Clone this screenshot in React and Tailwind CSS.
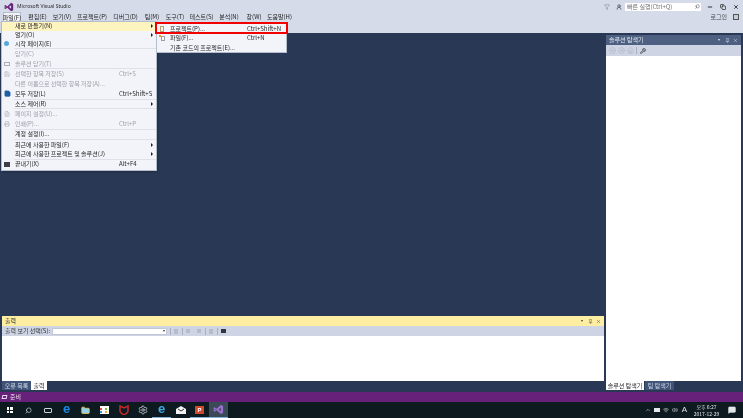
import React from "react";
import { Search, Settings, Filter, Wrench, Pin, X, Minus, Copy, ChevronUp, Home, CircleArrowLeft, CircleArrowRight, Wifi, Volume2, MessageSquare, Folder, Save, Printer, FileText, UserRound } from "lucide-react";

const VS = ({ s = 12, c = "#68217a" }) => (
  <svg width={s} height={s} viewBox="0 0 24 24"><path d="M17 2l5 2.500v15L17 22 8 13.500 3.500 17 1.500 16V8l2-1L8 10.500 17 2zM4 10v4l2-2zM12 12l5 4V8z" fill={c} /></svg>
);

const menus = [
  ["파일(F)", "w-[18px] ml-[3px] bg-[#f2f4f9] border-x border-t border-[#b4bdcb]"], ["편집(E)", "w-[17px] ml-[8px]"], ["보기(V)", "w-[18px] ml-[7px]"], ["프로젝트(P)", "w-[28px] ml-[7px]"],
  ["디버그(D)", "w-[25px] ml-[7px]"], ["팀(M)", "w-[14px] ml-[7px]"], ["도구(T)", "w-[18px] ml-[7px]"], ["테스트(S)", "w-[23px] ml-[6px]"],
  ["분석(N)", "w-[18px] ml-[7px]"], ["창(W)", "w-[14px] ml-[9px]"], ["도움말(H)", "w-[23px] ml-[7px]"],
];

const Row = ({ label, key2, arrow, off, hi, icon, short }) => (
  <div className={`relative flex items-center ${short ? "h-[8.700px]" : "h-[9.700px]"} pl-[13px] pr-[3px] ${hi ? "bg-[#fdf4bf]" : ""} ${off ? "text-[#9a9fa8]" : "text-[#1e1e1e]"}`}>
    {icon && <span className="absolute left-[2px] top-0 h-full flex items-center">{icon}</span>}
    <span className="flex-1 whitespace-nowrap">{label}</span>
    {key2 && <span className="absolute left-[117px] whitespace-nowrap">{key2}</span>}
    {arrow && <span className="w-0 h-0 border-y-[2px] border-y-transparent border-l-[2.500px] border-l-[#1e1e1e]" />}
  </div>
);
const Sep = () => <div className="h-px ml-[12px] bg-[#dde1ea]" />;

function FileMenu() {
  return (
    <div className="absolute left-[1px] top-[21px] w-[156px] h-[150px] bg-[#f2f4f9] border border-[#b4bdcb] shadow-[1px_1px_2px_rgba(0,0,0,0.25)]">
      <Row short label="새로 만들기(N)" arrow hi />
      <Row short label="열기(O)" arrow />
      <Row short label="시작 페이지(E)" icon={<span className="block w-[5px] h-[5px] rounded-full bg-[#56a8dc]" />} />
      <Sep />
      <Row label="닫기(C)" off />
      <Row label="솔루션 닫기(T)" off icon={<span className="block w-[6px] h-[4px] border border-[#aab0bc]" />} />
      <Sep />
      <Row label="선택한 항목 저장(S)" key2="Ctrl+S" off icon={<Save size={6} className="text-[#a5abb6]" />} />
      <Row label="다른 이름으로 선택한 항목 저장(A)..." off />
      <Row label="모두 저장(L)" key2="Ctrl+Shift+S" icon={<Save size={7} className="text-[#1d5fa8] fill-[#1d5fa8]" />} />
      <Sep />
      <Row short label="소스 제어(R)" arrow />
      <Sep />
      <Row label="페이지 설정(U)..." off icon={<FileText size={6} className="text-[#a5abb6]" />} />
      <Row label="인쇄(P)..." key2="Ctrl+P" off icon={<Printer size={6} className="text-[#a5abb6]" />} />
      <Sep />
      <Row label="계정 설정(I)..." />
      <Sep />
      <Row label="최근에 사용한 파일(F)" arrow />
      <Row short label="최근에 사용한 프로젝트 및 솔루션(J)" arrow />
      <Sep />
      <Row label="끝내기(X)" key2="Alt+F4" icon={<span className="block w-[6px] h-[5px] bg-[#3a3f4a]" />} />
    </div>
  );
}

function SubMenu() {
  const cls = "relative flex items-center h-[9.500px] pl-[13px] text-[#1e1e1e] whitespace-nowrap";
  return (
    <div className="absolute left-[156px] top-[23px] w-[131px] h-[30px] bg-[#f2f4f9] border border-[#b4bdcb]">
      <div className={cls}>
        <span className="absolute left-[3px] w-[4px] h-[6px] border border-[#b9a06a]" />
        프로젝트(P)...<span className="absolute left-[90px]">Ctrl+Shift+N</span>
      </div>
      <div className={cls}>
        <span className="absolute left-[4px] w-[4px] h-[5px] border border-[#9a9fa8] bg-white" />
        <span className="absolute left-[2px] top-[1px] w-[2px] h-[2px] bg-[#e0a030]" />
        파일(F)...<span className="absolute left-[90px]">Ctrl+N</span>
      </div>
      <div className={cls}>기존 코드의 프로젝트(E)...</div>
      <div className="absolute -left-[2px] -top-[2px] w-[133px] h-[12px] border-2 border-[#f00000]" />
    </div>
  );
}

const tw = "flex items-center justify-center w-[19px] h-full shrink-0";
const sq = "block w-[2px] h-[2px]";

export default function App() {
  return (
    <div className="relative w-[743px] h-[418px] overflow-hidden flex flex-col bg-[#293955] text-[6px] leading-none text-[#1e1e1e] blur-[0.5px] font-['Noto_Sans_CJK_KR','Noto_Sans',sans-serif]">
      {/* header */}
      <div className="h-[33px] shrink-0 bg-[#d6dbe9] flex flex-col">
        <div className="h-[11px] flex items-center pl-[4px] pr-[3px] mt-px">
          <VS s={10} />
          <span className="ml-[3px] text-[#2a2a2a] font-['Noto_Sans',sans-serif] text-[5px]">Microsoft Visual Studio</span>
          <span className="flex-1" />
          <Filter size={6} className="text-[#7a8294] mr-[6px]" />
          <UserRound size={6} strokeWidth={3} className="text-[#4a5160] mr-[3px]" />
          <div className="w-[76px] h-[8px] bg-white flex items-center pl-[2px] pr-[1px] text-[#6d6d6d]">
            <span className="flex-1">빠른 실행(Ctrl+Q)</span>
            <Search size={5} className="text-[#333] -scale-x-100" />
          </div>
          <Minus size={6} strokeWidth={4} className="ml-[6px] text-[#333]" />
          <Copy size={6} strokeWidth={3} className="ml-[7px] text-[#333]" />
          <X size={6} strokeWidth={3.500} className="ml-[7px] mr-[1px] text-[#333]" />
        </div>
        <div className="relative h-[10px] flex items-center text-[#1e1e1e]">
          {menus.map(([t, w]) => (
            <span key={t} className={`${w} h-full items-center shrink-0 whitespace-nowrap flex justify-center`}>{t}</span>
          ))}
          <span className="flex-1" />
          <span className="mr-[6px] text-[#444]">로그인</span>
          <span className="mr-[4px] w-[6px] h-[6px] border border-[#555] bg-[#c8cdd9]" />
        </div>
      </div>

      {/* body */}
      <div className="flex-1 min-h-0 flex">
        <div className="w-[604px] shrink-0 pl-[2px] pb-[2px] flex flex-col">
          <div className="flex-1" />
          <div className="h-[10px] bg-[#fdeea1] flex items-center pl-[3px] pr-[3px]">
            <span className="flex-1">출력</span>
            <span className="w-0 h-0 border-x-[1.500px] border-x-transparent border-t-[2px] border-t-[#444] mr-[5px]" />
            <Pin size={5} className="mr-[3px] text-[#444]" />
            <X size={5} className="text-[#444]" />
          </div>
          <div className="h-[10px] bg-[#ced4e3] flex items-center pl-[3px]">
            <span className="w-[47px] text-[#333] whitespace-nowrap">출력 보기 선택(S):</span>
            <div className="w-[115px] h-[7px] bg-white border border-[#c2c8d4] flex items-center justify-end pr-[1px]">
              <span className="w-0 h-0 border-x-[1.500px] border-x-transparent border-t-[2px] border-t-[#333]" />
            </div>
            <span className="w-px h-[7px] bg-[#aab0bf] ml-[3px]" />
            <span className="w-[4px] h-[5px] bg-[#b6bcc9] ml-[3px]" />
            <span className="w-px h-[7px] bg-[#aab0bf] ml-[4px]" />
            <span className="w-[4px] h-[4px] bg-[#b6bcc9] ml-[3px]" />
            <span className="w-[4px] h-[4px] bg-[#b6bcc9] ml-[7px]" />
            <span className="w-px h-[7px] bg-[#aab0bf] ml-[4px]" />
            <span className="w-[4px] h-[5px] bg-[#b6bcc9] ml-[3px]" />
            <span className="w-px h-[7px] bg-[#aab0bf] ml-[4px]" />
            <span className="w-[5px] h-[4px] bg-[#33363d] ml-[3px]" />
          </div>
          <div className="h-[45px] bg-white" />
          <div className="h-[9px] flex">
            <span className="w-[29px] flex items-center justify-center text-[#cfd6e4] bg-[#3f5478]">오류 목록</span>
            <span className="w-[16px] flex items-center justify-center bg-white text-[#1e1e1e]">출력</span>
          </div>
        </div>
        <div className="ml-[2px] w-[135px] mt-[2px] pb-[2px] flex flex-col">
          <div className="h-[10px] bg-[#4d6082] flex items-center pl-[3px] pr-[3px] text-[#e6e9f1]">
            <span className="flex-1">솔루션 탐색기</span>
            <span className="w-0 h-0 border-x-[1.500px] border-x-transparent border-t-[2px] border-t-[#e6e9f1] mr-[5px]" />
            <Pin size={5} className="mr-[3px]" />
            <X size={5} />
          </div>
          <div className="h-[11px] bg-[#ced4e3] flex items-center pl-[3px] gap-[2px]">
            <CircleArrowLeft size={7} className="text-[#aeb4c1]" />
            <CircleArrowRight size={7} className="text-[#aeb4c1]" />
            <Home size={7} className="text-[#aeb4c1]" />
            <span className="w-px h-[7px] bg-[#aab0bf]" />
            <Wrench size={6} strokeWidth={3} className="text-[#333] ml-px" />
          </div>
          <div className="flex-1 bg-white" />
          <div className="h-[9px] flex">
            <span className="w-[38px] flex items-center justify-center bg-white">솔루션 탐색기</span>
            <span className="w-[29px] ml-px flex items-center justify-center text-[#cfd6e4] bg-[#3f5478]">팀 탐색기</span>
          </div>
        </div>
      </div>

      {/* status */}
      <div className="h-[10px] shrink-0 bg-[#68217a] flex items-center pl-[2px] text-[#e9dcee]">
        <span className="w-[5px] h-[4px] border border-[#e9dcee] -skew-x-12" />
        <span className="ml-[3px]">준비</span>
      </div>

      {/* taskbar */}
      <div className="h-[16px] shrink-0 bg-[#0d1a20] flex items-center text-[#e4e8ea]">
        <div className="flex items-center h-full">
          <span className={tw}><span className="grid grid-cols-2 gap-px w-[6px] h-[6px]"><i className="bg-white" /><i className="bg-white" /><i className="bg-white" /><i className="bg-white" /></span></span>
          <span className={tw}><Search size={7} className="-scale-x-100" /></span>
          <span className={tw}><span className="w-[8px] h-[5px] border border-[#cfd3d6] rounded-[1px]" /></span>
          <span className={tw}><span className="text-[13px] font-bold leading-none text-[#1e88e5] font-['Liberation_Sans',sans-serif] -mt-[3px]">e</span></span>
          <span className={tw}><Folder size={9} className="text-[#f5c84b] fill-[#8fd0ef]" /></span>
          <span className={tw}>
            <span className="w-[9px] h-[8px] bg-white grid grid-cols-2 gap-px content-center justify-center">
              <i className={`${sq} bg-[#e8483a]`} /><i className={`${sq} bg-[#7cb93a]`} /><i className={`${sq} bg-[#2b9be0]`} /><i className={`${sq} bg-[#f2b01e]`} />
            </span>
          </span>
          <span className={tw}>
            <svg width="10" height="10" viewBox="0 0 10 10"><path d="M1 1l4 2 4-2v5c0 2-2 3-4 4-2-1-4-2-4-4z" fill="none" stroke="#c62828" strokeWidth="1.500" /></svg>
          </span>
          <span className={tw}><Settings size={10} className="text-[#c8ccd0]" /></span>
          <span className={`${tw} border-b border-[#7fb2d8]`}><span className="text-[13px] font-bold leading-none text-[#3fa9e0] font-['Liberation_Sans',sans-serif] -mt-[3px]">e</span></span>
          <span className={tw}>
            <svg width="10" height="8" viewBox="0 0 10 8"><path d="M0 3l5-3 5 3v5H0z" fill="#f2f2f2" /><path d="M2 3l3 2 3-2" fill="none" stroke="#333" /></svg>
          </span>
          <span className={`${tw} border-b border-[#7fb2d8]`}><span className="w-[9px] h-[8px] bg-[#d2482a] text-white text-[6px] font-bold flex items-center justify-center font-['Liberation_Sans',sans-serif]">P</span></span>
          <span className={`${tw} bg-[#3a4a57] border-b border-[#7fb2d8]`}><VS s={11} c="#9a6fd0" /></span>
        </div>
        <span className="flex-1" />
        <ChevronUp size={6} className="mr-[3px]" />
        <span className="w-[6px] h-[4px] bg-[#e4e8ea] mr-[3px]" />
        <Wifi size={6} className="mr-[3px]" />
        <Volume2 size={6} className="mr-[4px]" />
        <span className="text-[8px] mr-[6px] font-['Liberation_Sans',sans-serif]">A</span>
        <div className="flex flex-col items-center gap-[2px] w-[27px] text-[5px]">
          <span>오후 6:27</span>
          <span>2017-12-29</span>
        </div>
        <MessageSquare size={8} className="ml-[8px] mr-[7px] fill-[#e4e8ea]" />
      </div>

      <FileMenu />
      <SubMenu />
    </div>
  );
}
